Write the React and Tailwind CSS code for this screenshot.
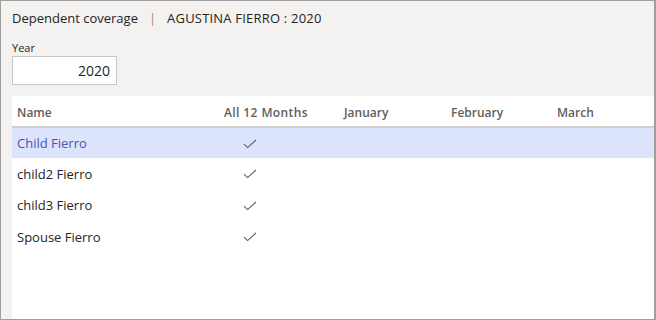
import { useState } from "react"

const rows=["Child Fierro","child2 Fierro","child3 Fierro","Spouse Fierro"]
const months=[["January","w-[107px]"],["February","w-[106px]"],["March","w-[90px]"]]

const Check=()=>(
    <svg width="14" height="10" viewBox="0 0 14 10" fill="none">
        <path d="M1 5.2 L4.6 8.6 L13 1" stroke="#605e5c" strokeWidth="1.1"/>
    </svg>
)

const App=()=>{
    const [year,setyear]=useState('2020')
    const [sel,setsel]=useState(0)

    return(
        <div className="h-[320px] w-[656px] bg-[#f3f2f1] border-t border-l border-b border-r-2 border-[#a19f9d] flex flex-col" style={{fontFamily:'"Open Sans","Liberation Sans",sans-serif'}}>
            <div className="pl-[11px] pt-[4px] h-[32px] text-[13px] text-[#252423] flex items-center">
                <span>Dependent coverage</span>
                <span className="text-[#a88a5c] px-[11px]">|</span>
                <span className="tracking-[0.2px]">AGUSTINA FIERRO : 2020</span>
            </div>
            <div className="pl-[11px] pt-[8px] text-[11px] text-[#252423] leading-[13px]">Year</div>
            <div className="pl-[11px] pt-[2px]">
                <input className="w-[105px] h-[29px] bg-white border border-[#c8c6c4] text-right px-[6px] text-[14px] text-[#252423] outline-none" value={year} onChange={(e)=>setyear(e.target.value)}/>
            </div>
            <div className="flex-1 ml-[11px] mt-[11px] bg-white">
                <div className="flex h-[32px] items-center border-b-2 border-[#d2d0ce] text-[12px] font-semibold text-[#605e5c] pt-[3px]">
                    <div className="w-[212px] shrink-0 pl-[5px]">Name</div>
                    <div className="w-[120px] shrink-0 tracking-[0.4px]">All 12 Months</div>
                    {months.map(([m,w])=>(
                        <div key={m} className={w+" shrink-0"}>{m}</div>
                    ))}
                </div>
                {rows.map((r,i)=>(
                    <div key={r} onClick={()=>setsel(i)} className={i===sel?"flex h-[30px] items-center bg-[#dbe4fb] text-[#4f52b2] text-[13px] pt-[1px] cursor-pointer":"flex h-[31.5px] items-center text-[#252423] text-[13px] pt-[1px] cursor-pointer"}>
                        <div className="w-[212px] shrink-0 pl-[5px]">{r}</div>
                        <div className="w-[120px] shrink-0 pl-[19px] flex"><Check/></div>
                    </div>
                ))}
            </div>
        </div>
    )
}

export default App
